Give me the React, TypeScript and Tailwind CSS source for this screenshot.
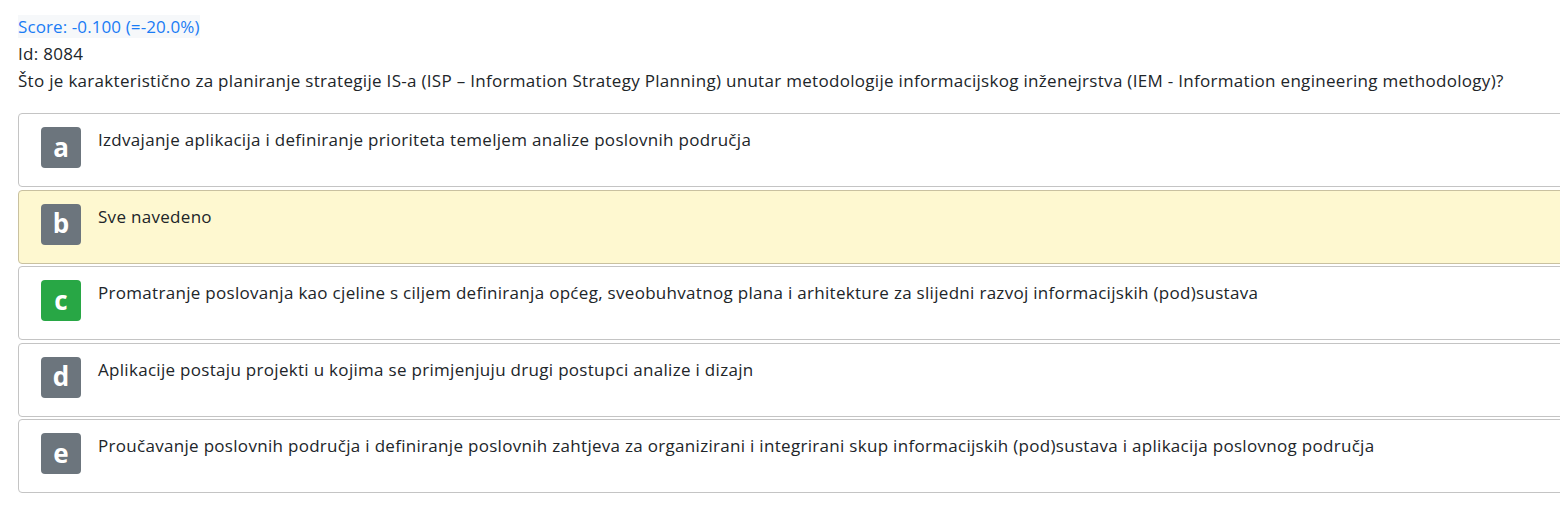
const answers = [
  { letter: "a", text: "Izdvajanje aplikacija i definiranje prioriteta temeljem analize poslovnih područja", state: "none" },
  { letter: "b", text: "Sve navedeno", state: "selected" },
  {
    letter: "c",
    text: "Promatranje poslovanja kao cjeline s ciljem definiranja općeg, sveobuhvatnog plana i arhitekture za slijedni razvoj informacijskih (pod)sustava",
    state: "correct",
  },
  { letter: "d", text: "Aplikacije postaju projekti u kojima se primjenjuju drugi postupci analize i dizajn", state: "none" },
  {
    letter: "e",
    text: "Proučavanje poslovnih područja i definiranje poslovnih zahtjeva za organizirani i integrirani skup informacijskih (pod)sustava i aplikacija poslovnog područja",
    state: "none",
  },
];

function AnswerRow({ letter, text, state }: { letter: string; text: string; state: string }) {
  return (
    <div
      className={`flex items-start h-[74px] w-[1580px] rounded-[4px] border pl-[22px] pt-[13px] ${
        state === "selected" ? "bg-[#fef8d0] border-[#c9c1a0]" : "bg-white border-[#c4c4c4]"
      }`}
    >
      <div
        className={`flex h-[41px] w-[40px] shrink-0 items-center justify-center rounded-[4px] text-[26px] font-bold leading-none tracking-normal text-white pb-[2px] ${
          state === "correct" ? "bg-[#28a745]" : "bg-[#6c757d]"
        }`}
      >
        {letter}
      </div>
      <p className="ml-[17px] pt-[1px] text-[17px] leading-[24px] tracking-[0.3px] text-[#212529]">{text}</p>
    </div>
  );
}

export default function App() {
  return (
    <div className="h-[531px] w-[1560px] overflow-hidden bg-white font-['Open_Sans',sans-serif] text-[17px] tracking-[0.3px] text-[#212529]">
      <div className="pl-[18px] pt-[13px]">
        <div className="leading-[27px]">
          <span className="bg-[#f6f8fa] tracking-[0.1px] text-[#1a7cf5]">Score: -0.100 (=-20.0%)</span>
        </div>
        <div className="leading-[27px]">Id: 8084</div>
        <div className="leading-[27px]">
          Što je karakteristično za planiranje strategije IS-a (ISP – Information Strategy Planning) unutar metodologije informacijskog inženejrstva (IEM - Information engineering methodology)?
        </div>
        <div className="mt-[19px] flex flex-col gap-[2.5px]">
          {answers.map((a) => (
            <AnswerRow key={a.letter} {...a} />
          ))}
        </div>
      </div>
    </div>
  );
}
